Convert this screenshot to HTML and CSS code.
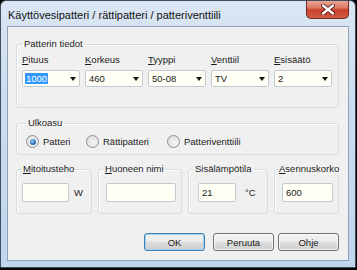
FILE: index.html
```html
<!DOCTYPE html>
<html lang="fi">
<head>
    <meta charset="UTF-8">
    <title>Käyttövesipatteri / rättipatteri / patteriventtiili</title>
    <link rel="stylesheet" href="styles.css">
</head>
<body>
    <div class="window">
        <div class="titlebar">
            <span class="title">Käyttövesipatteri / rättipatteri / patteriventtiili</span>
            <button class="close" aria-label="Sulje">
                <svg width="14" height="11" viewBox="0 0 14 11">
                    <path d="M2 1.5 L12 9.5 M12 1.5 L2 9.5" stroke="#5a1a12" stroke-width="4.2" stroke-linecap="round"/>
                    <path d="M2 1.5 L12 9.5 M12 1.5 L2 9.5" stroke="#fff" stroke-width="2.4" stroke-linecap="round"/>
                </svg>
            </button>
        </div>
        <div class="client">
            <fieldset class="group">
                <legend>Patterin tiedot</legend>
                <div class="combo-row">
                    <div class="field">
                        <span class="label"><u>P</u>ituus</span>
                        <div class="combo"><span class="selected">1000</span><span class="arrow"></span></div>
                    </div>
                    <div class="field">
                        <span class="label"><u>K</u>orkeus</span>
                        <div class="combo"><span>460</span><span class="arrow"></span></div>
                    </div>
                    <div class="field">
                        <span class="label"><u>T</u>yyppi</span>
                        <div class="combo"><span>50-08</span><span class="arrow"></span></div>
                    </div>
                    <div class="field">
                        <span class="label"><u>V</u>enttiil</span>
                        <div class="combo"><span>TV</span><span class="arrow"></span></div>
                    </div>
                    <div class="field">
                        <span class="label"><u>E</u>sisäätö</span>
                        <div class="combo"><span>2</span><span class="arrow"></span></div>
                    </div>
                </div>
            </fieldset>

            <fieldset class="group layout">
                <legend>Ulkoasu</legend>
                <div class="radio-row">
                    <label class="radio-item first"><span class="radio on"></span>Patteri</label>
                    <label class="radio-item second"><span class="radio"></span>Rättipatteri</label>
                    <label class="radio-item"><span class="radio"></span>Patteriventtiili</label>
                </div>
            </fieldset>

            <div class="small-groups">
                <fieldset class="group small power">
                    <legend><u>M</u>itoitusteho</legend>
                    <div class="input-row">
                        <div class="input w47"></div>
                        <span class="unit">W</span>
                    </div>
                </fieldset>
                <fieldset class="group small room">
                    <legend><u>H</u>uoneen nimi</legend>
                    <div class="input-row">
                        <div class="input w73"></div>
                    </div>
                </fieldset>
                <fieldset class="group small temp">
                    <legend>Sisälämpötila</legend>
                    <div class="input-row">
                        <div class="input w38">21</div>
                        <span class="unit">°C</span>
                    </div>
                </fieldset>
                <fieldset class="group small height">
                    <legend><u>A</u>sennuskorko</legend>
                    <div class="input-row">
                        <div class="input w53">600</div>
                    </div>
                </fieldset>
            </div>

            <div class="buttons">
                <button class="btn default">OK</button>
                <button class="btn cancel">Peruuta</button>
                <button class="btn">Ohje</button>
            </div>
        </div>
    </div>
</body>
</html>
```

FILE: styles.css
```css
body {
    margin: 0;
    background: #000;
    font-family: "Liberation Sans", Arial, sans-serif;
    font-size: 9.5px;
    color: #1b1b1b;
}

.window {
    width: 356px;
    height: 268px;
    box-sizing: border-box;
    border: 1px solid #414d5a;
    border-radius: 6px 6px 0 0;
    background: linear-gradient(180deg, #dae6f3 0%, #cbdcef 40%, #bfd5ed 100%);
    padding: 0 6px 6px 6px;
    display: flex;
    flex-direction: column;
}

.titlebar {
    height: 25px;
    display: flex;
    justify-content: space-between;
    align-items: flex-start;
}

.title {
    padding: 8px 0 0 1px;
    font-size: 11px;
    color: #111;
}

.close {
    width: 43px;
    height: 18px;
    margin: 0;
    padding: 0;
    border: 1px solid #6e2a22;
    border-top: none;
    border-radius: 0 0 5px 5px;
    background: linear-gradient(180deg, #e9a597 0%, #dc7b66 40%, #c9412b 52%, #d25c43 100%);
    display: flex;
    align-items: center;
    justify-content: center;
}

.client {
    flex: 1;
    border: 1px solid #8ea2b8;
    background: #f0f0f0;
    padding: 11px 9px 8px 8px;
    display: flex;
    flex-direction: column;
}

.group {
    margin: 0;
    padding: 4px 5px 20px 5px;
    border: 1px solid #d6dde3;
    border-radius: 3px;
    box-shadow: inset 1px 1px 0 #fff;
    min-inline-size: 0;
}

.group legend {
    padding: 0 2px;
    line-height: 12px;
}

.combo-row {
    display: grid;
    grid-template-columns: repeat(5, 63px);
}

.field {
    display: flex;
    flex-direction: column;
    gap: 4px;
}

.label {
    line-height: 12px;
}

.combo {
    width: 58px;
    height: 17px;
    box-sizing: border-box;
    border: 1px solid #c3cad2;
    border-radius: 2px;
    background: #fffff6;
    display: flex;
    align-items: center;
    justify-content: space-between;
    padding: 0 3px 0 3px;
}

.selected {
    background: #3399ff;
    color: #fff;
    padding: 0 1px;
    margin-left: -1px;
}

.arrow {
    width: 0;
    height: 0;
    border-left: 3.5px solid transparent;
    border-right: 3.5px solid transparent;
    border-top: 4px solid #111;
}

.layout {
    margin-top: 9px;
    padding: 6px 9px 6px 9px;
}

.radio-row {
    display: flex;
    align-items: center;
}

.radio-item {
    display: flex;
    align-items: center;
    gap: 4px;
    line-height: 13px;
}

.radio-item.first {
    width: 60px;
}

.radio-item.second {
    width: 81px;
}

.radio {
    width: 11px;
    height: 11px;
    border-radius: 50%;
    border: 1px solid #8a8f94;
    background: radial-gradient(circle at 60% 60%, #f4f4f4 0%, #dcdcdc 100%);
    display: flex;
    align-items: center;
    justify-content: center;
}

.radio.on::after {
    content: "";
    width: 6px;
    height: 6px;
    border-radius: 50%;
    background: radial-gradient(circle at 40% 35%, #8fd0ff 0%, #2a6fb0 60%, #1b4a80 100%);
}

.small-groups {
    margin-top: 8px;
    display: flex;
    gap: 6px;
}

.small {
    padding: 8px 5px 11px 5px;
}

.small legend {
    padding: 0 1px;
}

.power { width: 76px; }
.room { width: 84px; }
.temp { width: 80px; }
.height { width: 65px; }

.power, .room, .temp, .height {
    box-sizing: border-box;
}

.height {
    padding-left: 3px;
}

.input-row {
    display: flex;
    align-items: center;
}

.input {
    height: 19px;
    box-sizing: border-box;
    border: 1px solid #c3cad2;
    border-radius: 2px;
    background: #fffff6;
    padding: 0 3px;
    line-height: 17px;
}

.room .input-row {
    padding-left: 2px;
}

.height .input-row {
    padding-left: 4px;
}

.temp .input-row {
    padding-left: 4px;
}

.w47 { width: 47px; }
.w73 { width: 73px; }
.w38 { width: 38px; }
.w53 { width: 53px; }

.unit {
    margin-left: 5px;
}

.temp .unit {
    margin-left: 9px;
}

.buttons {
    margin-top: 19px;
    display: flex;
    justify-content: flex-end;
}

.btn {
    width: 61px;
    height: 18px;
    padding: 0;
    font-family: inherit;
    font-size: 9.5px;
    color: #1b1b1b;
    border: 1px solid #707070;
    border-radius: 3px;
    background: linear-gradient(180deg, #f2f2f2 0%, #ebebeb 48%, #dddddd 52%, #cfcfcf 100%);
    box-shadow: inset 0 0 0 1px rgba(255, 255, 255, 0.7);
}

.btn.default {
    border-color: #3c7fb1;
    box-shadow: inset 0 0 0 1px #9fd4f3;
    margin-right: 8px;
}

.btn.cancel {
    margin-right: 4px;
}
```
